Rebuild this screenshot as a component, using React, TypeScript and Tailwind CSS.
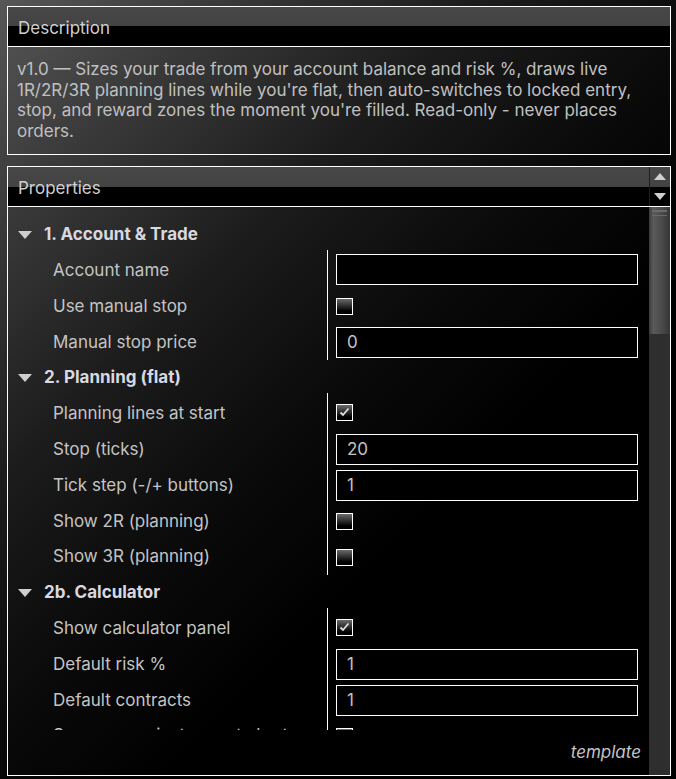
import React from "react";

type Row =
  | { kind: "text"; label: string; value: string }
  | { kind: "check"; label: string; checked: boolean };

type Group = { title: string; rows: Row[] };

const groups: Group[] = [
  {
    title: "1. Account & Trade",
    rows: [
      { kind: "text", label: "Account name", value: "" },
      { kind: "check", label: "Use manual stop", checked: false },
      { kind: "text", label: "Manual stop price", value: "0" },
    ],
  },
  {
    title: "2. Planning (flat)",
    rows: [
      { kind: "check", label: "Planning lines at start", checked: true },
      { kind: "text", label: "Stop (ticks)", value: "20" },
      { kind: "text", label: "Tick step (-/+ buttons)", value: "1" },
      { kind: "check", label: "Show 2R (planning)", checked: false },
      { kind: "check", label: "Show 3R (planning)", checked: false },
    ],
  },
  {
    title: "2b. Calculator",
    rows: [
      { kind: "check", label: "Show calculator panel", checked: true },
      { kind: "text", label: "Default risk %", value: "1" },
      { kind: "text", label: "Default contracts", value: "1" },
      { kind: "check", label: "Sync across instrument charts", checked: true },
    ],
  },
];

function Checkbox({ checked }: { checked: boolean }) {
  return (
    <div className="flex h-[17px] w-[17px] items-center justify-center border border-white bg-[linear-gradient(to_bottom,#6a6a6a,#000_80%)]">
      {checked && (
        <svg width="11" height="10" viewBox="0 0 11 10">
          <path d="M1.5 5.5 L4 8 L9.5 1.5" fill="none" stroke="#e0e0e0" strokeWidth="1.8" />
        </svg>
      )}
    </div>
  );
}

function Header({ title, arrows }: { title: string; arrows?: boolean }) {
  return (
    <div className="flex h-[40px] border-b border-white bg-[linear-gradient(to_bottom,#474747_0,#434343_50%,#000_50%)]">
      <div className="flex-1 pl-[10px] pt-[11px] text-[17px] leading-[20px] text-[#d0d0d0]">{title}</div>
      {arrows && (
        <div className="flex w-[21px] flex-col border-l border-[#1e1e1e]">
          <div className="flex h-[20px] items-center justify-center">
            <svg width="12" height="7" viewBox="0 0 12 7">
              <path d="M0 7 L6 0 L12 7 Z" fill="#d0d0d0" />
            </svg>
          </div>
          <div className="flex h-[20px] items-center justify-center">
            <svg width="12" height="7" viewBox="0 0 12 7">
              <path d="M0 0 L12 0 L6 7 Z" fill="#d0d0d0" />
            </svg>
          </div>
        </div>
      )}
    </div>
  );
}

export default function App() {
  return (
    <div
      className="h-[779px] w-[676px] overflow-hidden bg-[linear-gradient(135deg,#575757_0%,#3a3a3a_15%,#1c1c1c_33%,#0a0a0a_50%,#000_65%)] pl-[7px] pt-[6px]"
      style={{ fontFamily: "Inter, 'Noto Sans', sans-serif" }}
    >
      {/* Description */}
      <section className="w-[664px] border border-white">
        <Header title="Description" />
        <div className="h-[107px] px-[9px] pt-[12px] text-[17px] leading-[20.7px] text-[#c0c0c0]">
          v1.0 — Sizes your trade from your account balance and risk %, draws live 1R/2R/3R planning
          lines while you're flat, then auto-switches to locked entry, stop, and reward zones the
          moment you're filled. Read-only - never places orders.
        </div>
      </section>

      {/* Properties */}
      <section className="mt-[11px] flex h-[610px] w-[664px] flex-col border border-white">
        <Header title="Properties" arrows />
        <div className="flex min-h-0 flex-1">
          <div className="flex min-w-0 flex-1 flex-col">
            <div className="h-[523px] overflow-hidden pt-[10px]">
              {groups.map((g) => (
                <div key={g.title}>
                  <div className="flex h-[35.8px] items-center">
                    <svg className="ml-[10px]" width="14" height="8" viewBox="0 0 14 8">
                      <path d="M0 0 L14 0 L7 8 Z" fill="#cfcfcf" />
                    </svg>
                    <span className="ml-[12px] text-[17px] font-bold text-[#d8d9e0]">{g.title}</span>
                  </div>
                  {g.rows.map((r, i) => (
                    <div key={r.label} className="flex h-[35.8px]">
                      <div className="flex w-[319px] items-center pl-[45px] text-[17px] text-[#c4c4c4]">
                        {r.label}
                      </div>
                      <div
                        className={`flex flex-1 items-center border-l border-white pl-[8px] ${
                          i === 0 ? "mt-[-3px]" : ""
                        }`}
                      >
                        {r.kind === "text" ? (
                          <div className="flex h-[31px] w-[302px] items-center border border-white bg-black pl-[10px] text-[17px] text-[#c4c4c4]">
                            {r.value}
                          </div>
                        ) : (
                          <Checkbox checked={r.checked} />
                        )}
                      </div>
                    </div>
                  ))}
                </div>
              ))}
            </div>
            <div className="flex flex-1 items-center justify-end pr-[8px] text-[17px] italic text-[#c4c4c4]">
              template
            </div>
          </div>
          {/* scrollbar */}
          <div className="flex w-[21px] flex-col bg-[#2e2e2e] pb-[4px]">
            <div className="relative h-[127px] w-full bg-[linear-gradient(to_right,#3a3a3a,#5a5a5a_20%,#4a4a4a_60%,#353535)]">
              <div className="absolute left-[3px] right-[3px] top-[3px] h-[2px] bg-[#6a6a6a]" />
              <div className="absolute left-[3px] right-[3px] top-[8px] h-[1px] bg-[#6a6a6a]" />
            </div>
          </div>
        </div>
      </section>
    </div>
  );
}
